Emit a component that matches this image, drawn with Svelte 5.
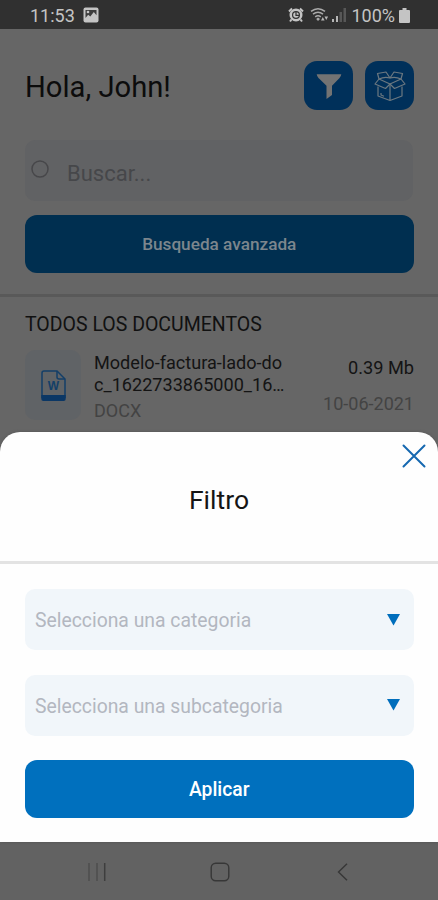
<script>
	let selects = [
		{ id: 'category', placeholder: 'Selecciona una categoria' },
		{ id: 'subcategory', placeholder: 'Selecciona una subcategoria' }
	];

	let documents = [
		{
			lines: ['Modelo-factura-lado-do', 'c_1622733865000_16…'],
			type: 'DOCX',
			size: '0.39 Mb',
			date: '10-06-2021'
		}
	];
</script>

<div class="phone">
	<header class="status">
		<span class="time">11:53</span>
		<svg class="picture" width="16" height="16" viewBox="0 0 16 16">
			<rect x="0.5" y="0.5" width="15" height="15" rx="2" fill="#c4c4c4" />
			<path d="M2.5 3h11v5.2L10.8 5 7.3 9.6 5.2 7.8 2.5 11Z" fill="#3d3d3d" />
			<circle cx="5" cy="5" r="1.3" fill="#c4c4c4" />
		</svg>
		<span class="spacer"></span>
		<svg class="alarm" width="16" height="16" viewBox="0 0 16 16">
			<path d="M1 4.5 4 1.5M12 1.5l3 3M3.5 12.5 2 14.5M12.5 12.5l1.5 2" stroke="#c4c4c4" stroke-width="2" />
			<circle cx="8" cy="8" r="6.5" fill="#c4c4c4" />
			<circle cx="8" cy="8" r="4" fill="#303030" />
			<circle cx="8" cy="8" r="2.8" fill="#c4c4c4" />
			<path d="M8 4.8V8.3h3" fill="none" stroke="#303030" stroke-width="1.2" />
		</svg>
		<svg class="wifi" width="20" height="16" viewBox="0 0 20 16" fill="none" stroke="#aaa" stroke-width="1.5">
			<path d="M1 4.4Q8 -1 15 4.4M3 7.2Q8 3.2 13 7.2M5.2 9.8Q8 7.8 10.8 9.8" />
			<path d="M8 10.5 10 12 8 14 6.2 12Z" fill="#aaa" stroke="none" />
			<path d="M11 13.5 12.8 10l1.8 3.500ZM14.500 9.500h3.600l-1.800 3.500Z" fill="#b5b5b5" stroke="none" />
		</svg>
		<svg class="signal" width="14" height="14" viewBox="0 0 14 14">
			<path d="M0 11h2v3H0ZM4 8h2v6H4Z" fill="#b5b5b5" />
			<path d="M7.500 4h2.500v10H7.500ZM11.500 0H14v14h-2.500Z" fill="#575757" />
		</svg>
		<span class="percent">100%</span>
		<svg class="battery" width="11" height="15" viewBox="0 0 11 15">
			<path d="M3.5 0h4v2H10q1 0 1 1v11q0 1-1 1H1q-1 0-1-1V3q0-1 1-1h2.5Z" fill="#c4c4c4" />
		</svg>
	</header>

	<main class="page">
		<div class="greeting">
			<h1>Hola, John!</h1>
			<button class="square" aria-label="Filtrar">
				<svg width="26" height="26" viewBox="0 0 26 26">
					<path d="M0.7 1.3h24.6Q25 3.5 23.5 5L16 12.8V22l-5.5 4V12.8L2.5 5Q1 3.5 0.7 1.3Z" fill="#737373" />
				</svg>
			</button>
			<button class="square" aria-label="Documentos">
				<svg width="32" height="32" viewBox="0 0 32 32" fill="none" stroke="#6b7880" stroke-width="1.200" stroke-linejoin="round">
					<path d="M16 8 12 2 3.500 3.500 5 9M16 8l4-6 8.500 1.500L27 9" />
					<path d="M5 9 1 14l10.500 4.500L16 14l4.500 4.500L31 14l-4-5" />
					<path d="M5 9q5.500-2.500 11-1 5.500-1.500 11 1" />
					<path d="M5 9l11 5 11-5" />
					<path d="M4 16.500V26l12 4.500L28 26v-9.500M16 14v16.500" />
					<path d="M7 23v2l3 1.200" />
				</svg>
			</button>
		</div>

		<div class="search">
			<svg width="20" height="20" viewBox="0 0 20 20">
				<circle cx="10" cy="10" r="8" fill="none" stroke="#47474a" stroke-width="1.5" />
			</svg>
			<span>Buscar...</span>
		</div>
		<button class="advanced">Busqueda avanzada</button>

		<hr />

		<h2>TODOS LOS DOCUMENTOS</h2>
		{#each documents as doc}
			<div class="document">
				<div class="thumb">
					<svg width="25" height="31" viewBox="0 0 25 31">
						<path d="M1 28V3q0-2 2-2h13l8 8v19" fill="none" stroke="#133f68" stroke-width="1.5" />
						<path d="M16 1v6q0 2 2 2h6" fill="none" stroke="#133f68" stroke-width="1.5" />
						<path d="M0.3 25h24.4v4q0 2-2 2H2.3q-2 0-2-2Z" fill="#0b3765" />
						<text x="12.5" y="20" text-anchor="middle">W</text>
					</svg>
				</div>
				<div class="info">
					{#each doc.lines as line}
						<div class="name">{line}</div>
					{/each}
					<div class="type">{doc.type}</div>
				</div>
				<div class="meta">
					<div class="size">{doc.size}</div>
					<div class="date">{doc.date}</div>
				</div>
			</div>
		{/each}
	</main>

	<section class="sheet">
		<div class="sheet-head">
			<h3>Filtro</h3>
			<button class="close" aria-label="Cerrar">
				<svg width="24" height="24" viewBox="0 0 24 24">
					<path d="M1.5 1.5l21 21M22.5 1.5l-21 21" stroke="#1668b0" stroke-width="2" stroke-linecap="round" />
				</svg>
			</button>
		</div>
		<div class="sheet-body">
			{#each selects as { id, placeholder } (id)}
				<div class="select">
					<span>{placeholder}</span>
					<svg width="13" height="12" viewBox="0 0 13 12">
						<path d="M0 0h13L6.5 11.500Z" fill="#006ebc" />
					</svg>
				</div>
			{/each}
			<button class="apply">Aplicar</button>
		</div>
	</section>

	<nav>
		<svg width="18" height="18" viewBox="0 0 18 18">
			<path d="M1 0v18M9 0v18" stroke="#4e4e4e" stroke-width="1.5" />
			<path d="M16.7 0v18" stroke="#3e3e3e" stroke-width="1.5" />
		</svg>
		<svg width="20" height="20" viewBox="0 0 20 20">
			<rect x="1.2" y="1.2" width="17.6" height="17.6" rx="4.5" fill="none" stroke="#373737" stroke-width="1.4" />
		</svg>
		<svg width="18" height="18" viewBox="0 0 18 18">
			<path d="M13 0.7 4.5 9l8.5 8.3" fill="none" stroke="#373737" stroke-width="1.4" />
		</svg>
	</nav>
</div>

<style>
	:global(body) {
		background: #626262;
	}

	.phone {
		width: 438px;
		height: 900px;
		overflow: hidden;
		display: flex;
		flex-direction: column;
		font-family: Roboto, 'Liberation Sans', sans-serif;
	}

	.phone * {
		box-sizing: border-box;
	}

	svg {
		display: block;
		flex: none;
	}

	h1,
	h2,
	h3 {
		margin: 0;
		font-weight: 400;
	}

	button {
		padding: 0;
		border: none;
		font-family: inherit;
	}

	.status {
		flex: none;
		height: 29px;
		padding: 1px 28px 0 30px;
		display: flex;
		align-items: center;
		background: #303030;
		color: #c4c4c4;
		font-size: 18px;
	}

	.picture {
		margin-left: 8px;
	}

	.spacer {
		flex: 1;
	}

	.wifi {
		margin-left: 6px;
	}

	.signal {
		margin-left: 2px;
	}

	.percent {
		margin-left: 5px;
	}

	.battery {
		margin-left: 4px;
	}

	.page {
		flex: none;
		height: 418px;
		background: #666;
	}

	.greeting {
		display: flex;
		gap: 12px;
		padding: 32px 24px 0 25px;
	}

	h1 {
		flex: 1;
		color: #0c0c0c;
		font-size: 29.2px;
		line-height: 53px;
	}

	.square {
		width: 49px;
		height: 49px;
		border-radius: 13px;
		background: #00305a;
		display: flex;
		align-items: center;
		justify-content: center;
	}

	.search {
		height: 61px;
		margin: 26px 25px 14px;
		padding-left: 5px;
		border-radius: 10px;
		background: #616264;
		color: #46474a;
		display: flex;
		align-items: center;
		gap: 17px;
		font-size: 22px;
	}

	.search svg {
		margin-bottom: 3px;
	}

	.search span {
		padding-top: 5px;
	}

	.advanced {
		display: block;
		width: 388.5px;
		height: 58px;
		margin: 0 25px;
		border-radius: 12px;
		background: #002f50;
		color: #7c868d;
		font-size: 17.2px;
		font-weight: 500;
	}

	hr {
		height: 3px;
		margin: 21px 0 16px;
		border: none;
		background: #595959;
	}

	h2 {
		padding: 0 25px;
		color: #111;
		font-size: 19.5px;
		line-height: 23px;
	}

	.document {
		display: flex;
		margin: 14px 24px 0 25px;
	}

	.thumb {
		width: 56px;
		height: 70px;
		border-radius: 10px;
		background: #606366;
		display: flex;
		align-items: center;
		justify-content: center;
	}

	.thumb text {
		fill: #133f68;
		font-family: 'Liberation Sans', sans-serif;
		font-size: 12px;
		font-weight: 700;
	}

	.info {
		flex: 1;
		padding: 2px 0 0 13px;
	}

	.name {
		color: #141414;
		font-size: 18.1px;
		line-height: 22px;
	}

	.type {
		color: #434343;
		font-size: 18px;
		line-height: 29px;
	}

	.meta {
		text-align: right;
	}

	.size {
		padding-top: 7px;
		color: #141414;
		font-size: 18.2px;
		line-height: 22px;
	}

	.date {
		padding-top: 14px;
		color: #434343;
		font-size: 18px;
		line-height: 22px;
	}

	.sheet {
		position: relative;
		flex: none;
		height: 410px;
		margin-top: -15px;
		border-radius: 20px 20px 0 0;
		background: #fefefe;
		box-shadow: 0 0 3px #4448;
	}

	.sheet-head {
		height: 132px;
		border-bottom: 3px solid #e3e3e3;
		padding-top: 52px;
	}

	h3 {
		color: #151515;
		font-size: 26.5px;
		line-height: 32px;
		text-align: center;
	}

	.close {
		position: absolute;
		top: 12px;
		right: 12px;
		background: none;
	}

	.sheet-body {
		padding: 25px 24.5px 0 25px;
		display: flex;
		flex-direction: column;
		gap: 24.5px;
	}

	.select {
		height: 61px;
		padding: 0 14px 0 10px;
		border-radius: 10px;
		background: #f1f6fa;
		color: #b3b7c0;
		display: flex;
		align-items: center;
		justify-content: space-between;
		font-size: 19.35px;
	}

	.select span {
		padding-top: 2px;
	}

	.apply {
		height: 58px;
		padding-top: 1px;
		border-radius: 12px;
		background: #0070be;
		color: #fff;
		font-size: 19.3px;
		font-weight: 500;
	}

	nav {
		flex: none;
		height: 58px;
		padding: 2px 86px 0 88px;
		background: #626262;
		display: flex;
		align-items: center;
		justify-content: space-between;
	}
</style>
